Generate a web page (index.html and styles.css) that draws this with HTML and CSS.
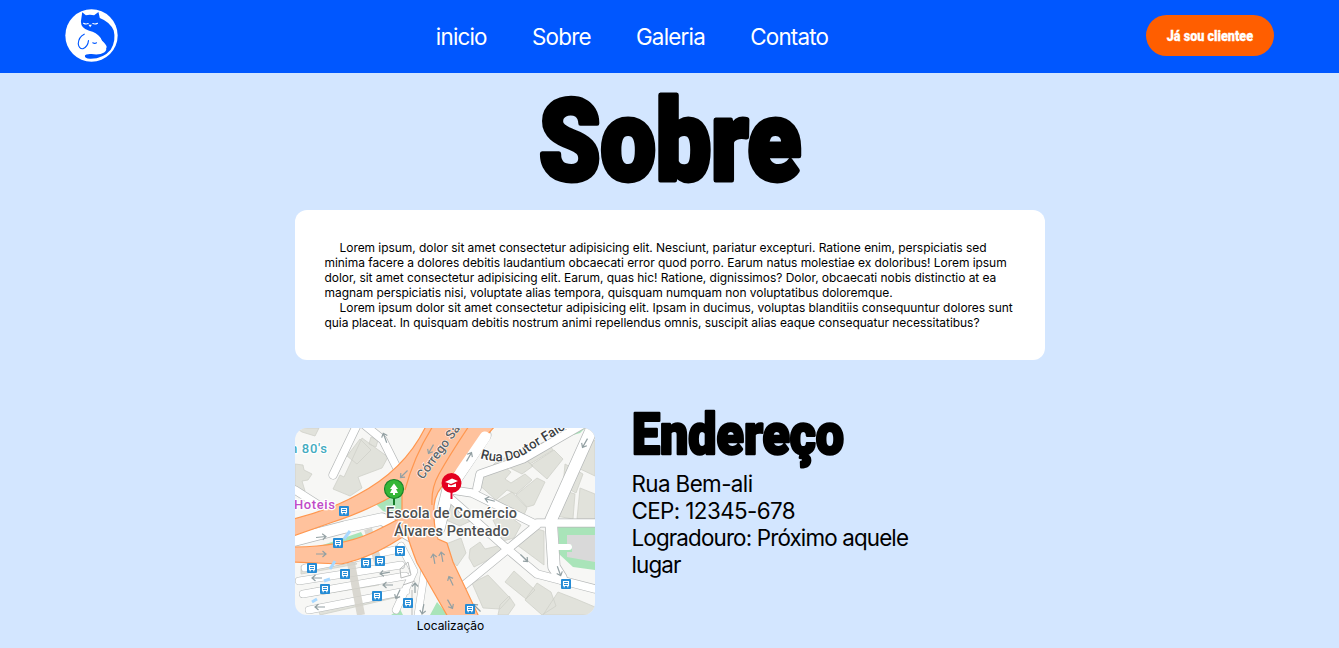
FILE: index.html
```html
<!DOCTYPE html>
<html lang="pt-BR">
<head>
<meta charset="utf-8">
<title>Sobre</title>
<link rel="stylesheet" href="styles.css">
</head>
<body>
<header class="header">
  <svg class="logo" viewBox="45 27 160 160">
    <circle cx="125" cy="107" r="79" fill="#fff"/>
    <path fill="#0057ff" d="M97 37 L108 46 Q120 43 133 46 L146 36 L150 54 Q181 66 192 92 Q200 122 183 150 Q160 178 120 177 Q104 176 105 168 Q107 162 125 163 Q150 167 163 158 Q173 150 168 143 Q157 128 152 114 Q140 98 118 93 Q93 86 93 65 Z"/>
    <path fill="#fff" d="M135 103 Q150 107 156 122 Q169 133 171 142 Q169 151 155 151 Q135 151 125 162 L110 161 L112 105 Z"/>
    <g fill="none" stroke-linecap="round" stroke-width="3.5">
      <path stroke="#fff" d="M101 70 Q108 74 115 71 M129 71 Q136 74 143 70 M119 76 L123 76 L121 79 Z"/>
      <path stroke="#0057ff" d="M103 103 Q86 111 85 132 Q87 148 99 147 Q114 141 116 122 M129 129 Q135 133 140 129"/>
    </g>
  </svg>
  <nav class="nav">
    <a>inicio</a><a>Sobre</a><a>Galeria</a><a>Contato</a>
  </nav>
  <button class="client"><span>Já sou clientee</span></button>
</header>
<main class="content">
  <h1 class="title">
    <svg width="270" height="137"><text x="4" y="107" textLength="262" lengthAdjust="spacingAndGlyphs">Sobre</text></svg>
  </h1>
  <section class="card">
    <p>Lorem ipsum, dolor sit amet consectetur adipisicing elit. Nesciunt, pariatur excepturi. Ratione enim, perspiciatis sed minima facere a dolores debitis laudantium obcaecati error quod porro. Earum natus molestiae ex doloribus! Lorem ipsum dolor, sit amet consectetur adipisicing elit. Earum, quas hic! Ratione, dignissimos? Dolor, obcaecati nobis distinctio at ea magnam perspiciatis nisi, voluptate alias tempora, quisquam numquam non voluptatibus doloremque.</p>
    <p>Lorem ipsum dolor sit amet consectetur adipisicing elit. Ipsam in ducimus, voluptas blanditiis consequuntur dolores sunt quia placeat. In quisquam debitis nostrum animi repellendus omnis, suscipit alias eaque consequatur necessitatibus?</p>
  </section>
  <section class="place">
    <figure class="figure">
      <svg class="map" viewBox="0 0 300 187">
        <defs>
          <g id="stop"><rect x="-5" y="-5" width="10" height="10" rx="1" fill="#258bd5"/><path d="M-2.5-2.5h5v4h-5zM-2.5 2.8h1.5M1 2.8h1.5M-2.5-.5h5" fill="none" stroke="#fff" stroke-width="1.1"/></g>
          <path id="arrow" d="M-5 0H5M1.500-3L5 0L1.500 3" fill="none" stroke="#93a0a3" stroke-width="1.2"/>
          <path id="streets" d="M62-3L38 47M66-6L88 12L107 50M0 62L25 78M157 62L177 65L242 97M182 60L185 46L228 31L292-6M242 95L300 95M168 158L242 97M155 70L210 119L242 146L300 161"/>
          <path id="avenues" d="M190 7L153 62L144 100M299-4L256 92L259 139L266 150M0 112L50 99L87 91L120 110"/>
          <path id="lanes" d="M10 140L105 121M4 153L106 137M8 166L110 148M14 182L111 163M106 118L119 143L101 182M130 140L123 187"/>
        </defs>
        <rect width="300" height="187" fill="#f7f7f5"/>
        <g fill="#e1e2db" stroke="#cfd0c9" stroke-width=".8">
          <path d="M0 36L8 37L9 42L17 46L13 52L7 53L10 63L0 60ZM1 0H24L20 8L7 4ZM67 10L93 29L87 40L63 49L67 60L55 68L38 61L45 47L49 49ZM52 28L65 11L76 22L62 36ZM76 9L83 12L81 19L74 16Z"/>
          <path d="M181 54L202 33L216 44L210 51L216 55L230 46L237 52L221 66L212 62L201 72ZM201 33L224 25L238 38L227 46ZM223 24L252 13L258 22L235 36ZM236 37L259 22L268 31L252 51ZM221 67L242 50L250 54L239 77L232 79ZM202 73L217 64L232 80L229 87ZM270 36L288 46L281 65L268 58ZM284 24L300 12V48L281 39ZM267 62L280 66L278 91L261 88ZM285 60L300 66V91H282Z"/>
          <path d="M152 78L165 76L180 91L165 98L151 92ZM151 116L166 110L171 125L162 138L151 126ZM175 121L185 114L190 121L211 116L199 129L179 139L174 130ZM198 92L213 87L226 97L219 110L208 113ZM222 117L242 101L249 103L249 137Z"/>
          <path d="M177 155L193 147L215 170L205 181L188 180ZM210 154L219 143L240 162L231 171ZM230 172L242 155L256 164L261 178L247 187ZM248 187L263 164L281 171L300 179V187ZM205 177L214 168L220 177L213 187H203Z"/>
          <path d="M6 138L57 130L62 136L6 146ZM16 161L80 151L84 157L16 168ZM23 180L101 163L103 169L25 187Z"/>
        </g>
        <g fill="#a9e4b9">
          <path d="M80 75L107 65L110 91L88 83ZM262 9L276 0H290L285 5L268 10ZM22 119L66 104L70 111L47 117ZM263 99H300V142L278 139L264 126Z"/>
          <path d="M135 187L142 174L153 187ZM96 187L105 181L108 187Z"/>
        </g>
        <path d="M272 107H300V134L272 129V124H277V117H272Z" fill="#d9d9d9"/>
        <g fill="none" stroke="#b5b8b8" stroke-linecap="round" stroke-linejoin="round">
          <use href="#streets" stroke-width="9"/>
          <use href="#avenues" stroke-width="13"/>
          <use href="#lanes" stroke-width="8"/>
        </g>
        <g fill="none" stroke="#fff" stroke-linecap="round" stroke-linejoin="round">
          <use href="#streets" stroke-width="7.6"/>
          <use href="#avenues" stroke-width="11.6"/>
          <use href="#lanes" stroke-width="7"/>
          <path d="M262 119H274" stroke-width="6"/>
        </g>
        <path d="M105 141L113 134L116 147L106 150ZM108 157L120 153M117 162V187" fill="none" stroke="#b9bbba"/>
        <path d="M56 135L66 187M73 101L84 137" fill="none" stroke="#d3d1c9" stroke-width="8" opacity=".85"/>
        <g fill="#ffc29d" stroke="#ff974f" stroke-width="1.2">
          <path d="M-2 91Q35 82 62 67Q110 42 131-2H200L152 53Q140 64 139 78Q138 98 143 111L152 115L158 134L168 155L184 189H153L122 135Q115 117 112 106Q77 130 46 136L-2 134V119Q45 119 76 105Q99 94 107 89L107 63Q70 84 38 94L-2 108Z"/>
          <path d="M138-2Q119 28 110 62M174-2Q154 28 144 46Q136 60 137 77" fill="none"/>
        </g>
        <path d="M190 9L153 63" stroke="#fff" stroke-width="11" stroke-linecap="round"/>
        <path d="M35 141L40 133M49 111L55 103M17 174L22 171M29 153L35 151" stroke="#a8d8ff" stroke-width="3"/>
        <use href="#arrow" transform="translate(26 126)"/><use href="#arrow" transform="translate(26 109) rotate(-6)"/>
        <use href="#arrow" transform="translate(109 46) rotate(135)"/><use href="#arrow" transform="translate(136 21) rotate(120)"/>
        <use href="#arrow" transform="translate(90 10) rotate(-110)"/><use href="#arrow" transform="translate(174 29) rotate(-60)"/>
        <use href="#arrow" transform="translate(290 15) rotate(120)"/><use href="#arrow" transform="translate(195 72) rotate(195)"/>
        <use href="#arrow" transform="translate(229 130) rotate(45)"/><use href="#arrow" transform="translate(264 143) rotate(70)"/>
        <use href="#arrow" transform="translate(139 131) rotate(-100)"/><use href="#arrow" transform="translate(147 129) rotate(-100)"/>
        <use href="#arrow" transform="translate(156 153) rotate(-115)"/><use href="#arrow" transform="translate(155 176) rotate(60)"/>
        <use href="#arrow" transform="translate(182 180) rotate(-135)"/><use href="#arrow" transform="translate(22 150) rotate(180)"/>
        <use href="#arrow" transform="translate(25 179) rotate(180)"/><use href="#arrow" transform="translate(90 145) rotate(170)"/>
        <use href="#arrow" transform="translate(93 157) rotate(180)"/><use href="#arrow" transform="translate(103 166) rotate(115)"/>
        <use href="#arrow" transform="translate(120 160) rotate(-90)"/><use href="#arrow" transform="translate(128 181) rotate(100)"/>
        <use href="#stop" x="49" y="83"/><use href="#stop" x="43" y="115"/><use href="#stop" x="17" y="140"/>
        <use href="#stop" x="50" y="146"/><use href="#stop" x="71" y="135"/><use href="#stop" x="85" y="133"/>
        <use href="#stop" x="105" y="123"/><use href="#stop" x="30" y="161"/><use href="#stop" x="82" y="168"/>
        <use href="#stop" x="113" y="175"/><use href="#stop" x="175" y="181"/><use href="#stop" x="271" y="156"/>
        <g class="map-text">
          <text x="-5" y="25" fill="#43abc0" textLength="37">n 80's</text>
          <text x="-1" y="81" fill="#c04bc7" textLength="41">Hoteis</text>
          <text class="street" transform="translate(128 52) rotate(-54)">Córrego Sa</text>
          <path id="doctor" d="M185 30Q213 39 235 23L285-8" fill="none"/>
          <text class="street dark"><textPath href="#doctor">Rua Doutor Falcã</textPath></text>
          <text class="school" x="91" y="90" textLength="131">Escola de Comércio</text>
          <text class="school" x="99" y="108" textLength="115">Álvares Penteado</text>
        </g>
        <path d="M99 68V77" stroke="#167c28" stroke-width="2"/>
        <circle cx="99" cy="61" r="9.5" fill="#35b637" stroke="#19852b" stroke-width="1.2"/>
        <path d="M99 55.500L95 61H97L95 65H98V67H100V65H103L101 61H103Z" fill="#fff"/>
        <path d="M156.500 62V71" stroke="#e4002b" stroke-width="2"/>
        <circle cx="156.500" cy="55" r="10" fill="#e4001f"/>
        <path d="M150 54L157 50.500L163 53L156 56ZM153 56L156 57.500L161 55.500V59H153Z" fill="#fff"/>
      </svg>
      <figcaption>Localização</figcaption>
    </figure>
    <div class="address">
      <h2 class="subtitle"><svg width="220" height="60"><text x="0" y="44" textLength="212" lengthAdjust="spacingAndGlyphs">Endereço</text></svg></h2>
      <p>Rua Bem-ali</p>
      <p>CEP: 12345-678</p>
      <p class="street-line">Logradouro: Próximo aquele lugar</p>
    </div>
  </section>
</main>
</body>
</html>
```

FILE: styles.css
```css
* { box-sizing: border-box; margin: 0; padding: 0; }
body { background: #d3e6ff; color: #000; font-family: Inter, sans-serif; font-size: 12px; overflow: hidden; }
.header { height: 73px; padding: 0 65px; background: #0057ff; display: flex; align-items: center; justify-content: space-between; }
.logo { width: 53px; height: 53px; display: block; margin-bottom: 2px; }
.nav { display: flex; gap: 45.3px; color: #fff; font-size: 22.4px; line-height: 27px; margin-bottom: 1px; letter-spacing: -.8px; }
.client { width: 128px; height: 41px; margin-bottom: 2px; border: 0; border-radius: 21px; background: #ff5e00; color: #fff; font: 900 14px Roboto, sans-serif; display: flex; align-items: center; justify-content: center; }
.client span { white-space: nowrap; transform: scaleX(.9); -webkit-text-stroke: .3px #fff; }
.content { width: 750px; margin: 0 auto; }
.title { height: 137px; text-align: center; }
.title svg { display: block; margin: 0 auto; overflow: visible; }
.title text { font: 900 113px Roboto, sans-serif; stroke: #000; stroke-width: 5px; stroke-linejoin: round; }
.card { height: 150px; padding: 30px; border-radius: 12px; background: #fff; line-height: 15px; letter-spacing: -.052px; }
.card p { text-indent: 15px; }
.place { display: flex; gap: 37px; margin-top: 50px; }
.figure { width: 300px; margin-top: 18px; text-align: center; }
.map { display: block; width: 300px; height: 187px; border-radius: 12px; }
.figure figcaption { margin-left: 12px; line-height: 15px; margin-top: 3px; letter-spacing: -.04px; }
.address { width: 300px; font-size: 22.4px; line-height: 27.1px; letter-spacing: -.6px; }
.street-line { letter-spacing: -.85px; }
.subtitle { height: 59.5px; }
.subtitle svg { display: block; overflow: visible; }
.subtitle text { font: 900 57px Roboto, sans-serif; letter-spacing: 0; stroke: #000; stroke-width: 2.6px; stroke-linejoin: round; }
.map-text { font: 500 13px Roboto, sans-serif; }
.map-text text { stroke: #fff; stroke-width: 2.5px; paint-order: stroke; }
.map-text .school { font-size: 14.5px; fill: #4c4f50; }
.map-text .street { font-size: 12.8px; fill: #626568; stroke-width: 1px; }
.map-text .dark { fill: #3d4143; stroke-width: 2px; font-size: 13.3px; }
```
